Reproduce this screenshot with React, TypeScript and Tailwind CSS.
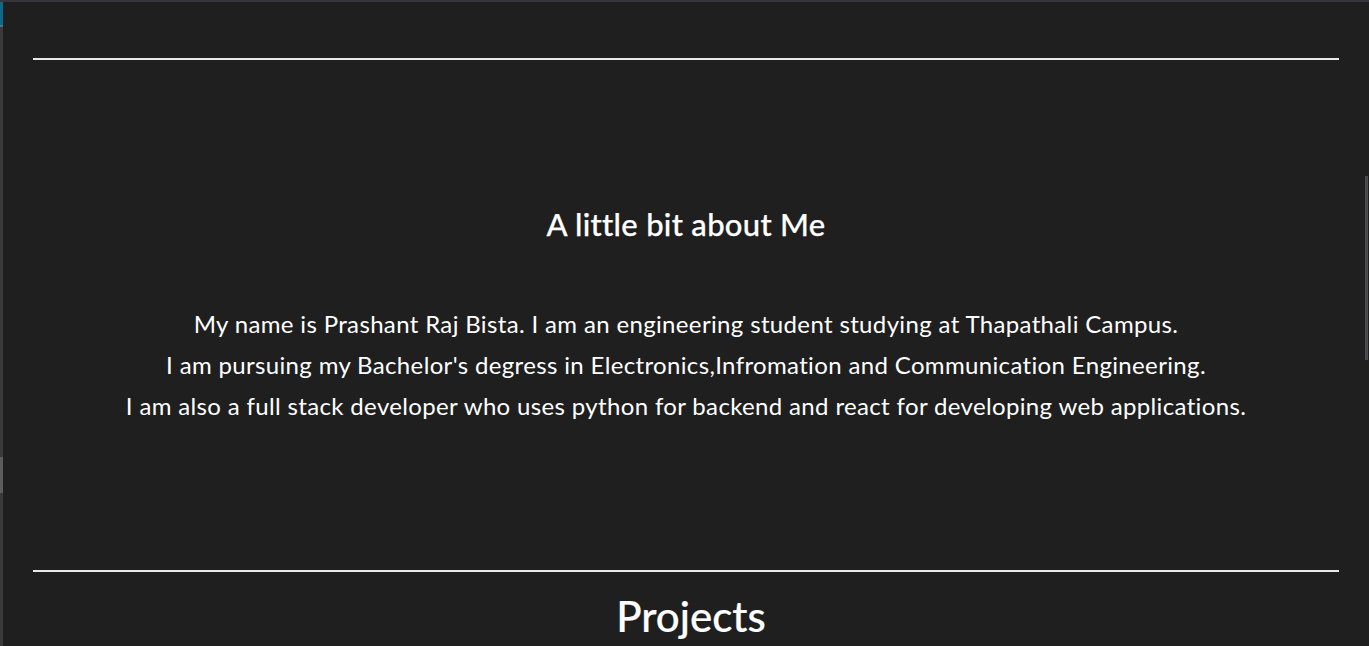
import React from "react";

const App = () => {
  // about text lines, kept as in the original page
  const aboutLines = [
    "My name is Prashant Raj Bista. I am an engineering student studying at Thapathali Campus.",
    "I am pursuing my Bachelor's degress in Electronics,Infromation and Communication Engineering.",
    "I am also a full stack developer who uses python for backend and react for developing web applications.",
  ];

  return (
    <div className="flex flex-col h-screen w-full overflow-hidden bg-[#1f1f1f] font-['Lato',sans-serif] text-white [font-variant-ligatures:none]">
      {/* top frame edge */}
      <div className="h-[2px] w-full bg-[#36363b] shrink-0" />
      <div className="flex flex-1 min-h-0">
        {/* left activity strip */}
        <div className="w-[3px] shrink-0 flex flex-col bg-[#3a3a3a]">
          <div className="h-[23px] bg-[#0b6a8a]" />
          <div className="h-[2px] bg-[#4f6f7c]" />
          <div className="h-[430px]" />
          <div className="h-[36px] bg-[#5c5c5c]" />
        </div>

        <main className="relative flex-1 px-[30px]">
          {/* scrollbar thumb */}
          <div className="absolute right-[1px] top-[174px] h-[184px] w-[3px] bg-[#4a4a4f]" />

          <hr className="mt-[56px] border-0 h-[2px] bg-[#e8e8e8]" />

          <section className="h-[510px] flex flex-col items-center pt-[146px]">
            <h2 className="text-[31px] font-medium leading-[36px] tracking-[0.3px] [-webkit-text-stroke:0.25px_white]">
              A little bit about Me
            </h2>
            <div className="mt-[61px] text-[24px] leading-[41px] tracking-[0.35px] text-center">
              {aboutLines.map((line, index) => (
                <p key={`${index * 2}`}>{line}</p>
              ))}
            </div>
          </section>

          <hr className="border-0 h-[2px] bg-[#e8e8e8]" />

          <h2 className="mt-[20px] pl-[10px] text-[42px] font-medium leading-[48px] text-center [-webkit-text-stroke:0.2px_white]">
            Projects
          </h2>
        </main>
      </div>
    </div>
  );
};

export default App;
